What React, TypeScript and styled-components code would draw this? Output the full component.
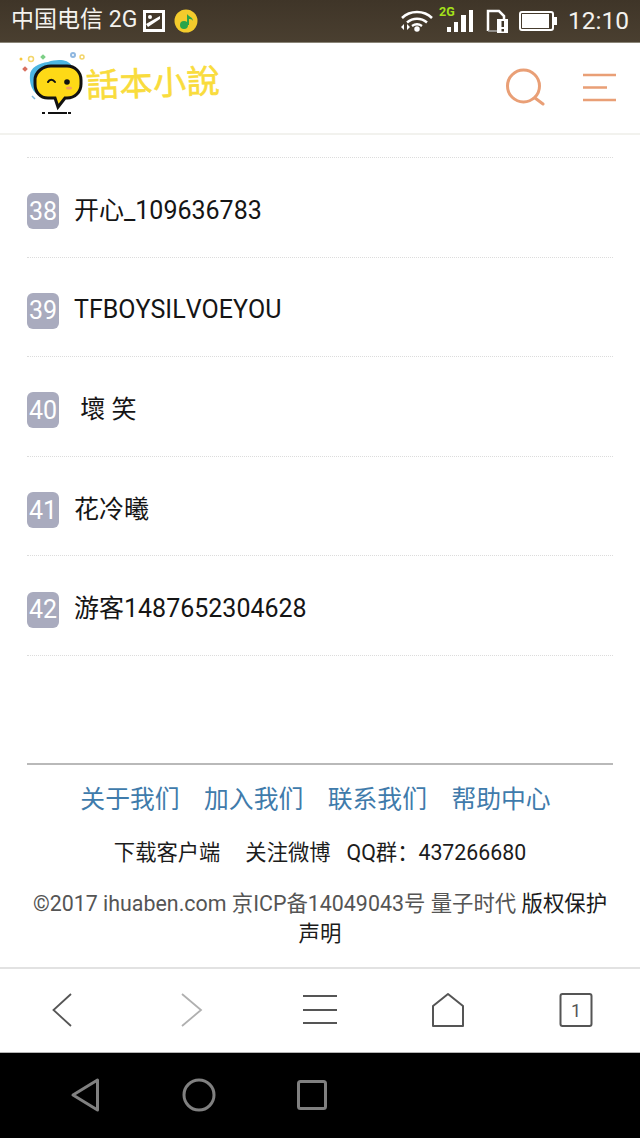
import React from 'react';
import styled, { createGlobalStyle } from 'styled-components';

const GlobalStyle = createGlobalStyle`
  html, body {
    margin: 0;
    padding: 0;
    background: #fff;
  }
  body {
    font-family: Roboto, "Noto Sans CJK SC", sans-serif;
    font-kerning: none;
  }
`;

const Page = styled.div`
  display: flex;
  flex-direction: column;
  height: 1138px;
  overflow: hidden;
  width: 640px;
`;

const StatusBar = styled.div`
  align-items: center;
  background: linear-gradient(#3f3528, #4a3f30);
  border-bottom: 1px solid #8a8578;
  box-sizing: border-box;
  color: #f4f2ee;
  display: flex;
  height: 43px;
  justify-content: space-between;
  padding: 0 11px 0 11px;
`;

const StatusGroup = styled.div<{ $gap: number }>`
  align-items: center;
  display: flex;
  gap: ${(p) => p.$gap}px;
`;

const Carrier = styled.span`
  font-size: 23px;
  line-height: 30px;
  margin-bottom: 3px;
`;

const Clock = styled.span`
  font-size: 24.5px;
  line-height: 30px;
`;

const Header = styled.header`
  align-items: flex-start;
  border-bottom: 2px solid #f2f2ee;
  box-sizing: border-box;
  display: flex;
  height: 92px;
  justify-content: space-between;
  padding: 8px 24px 0 18px;
`;

const Logo = styled.div`
  align-items: flex-start;
  display: flex;
`;

const LogoText = styled.span`
  color: #f9dc3c;
  font-family: "Noto Sans CJK TC", sans-serif;
  font-size: 33px;
  letter-spacing: 0.5px;
  line-height: 40px;
  margin: 10px 0 0 -4px;
  -webkit-text-stroke: 0.6px #f9dc3c;
  transform: rotate(-2deg);
`;

const HeaderActions = styled.div`
  align-items: center;
  display: flex;
  gap: 36px;
  padding-top: 17px;
`;

const List = styled.ul`
  border-top: 1px dotted #dcdcdc;
  flex: none;
  list-style: none;
  margin: 22px 27px 0;
  padding: 0;
`;

const Row = styled.li`
  align-items: center;
  border-bottom: 1px dotted #dcdcdc;
  box-sizing: border-box;
  display: flex;
  gap: 15px;
  height: 99.6px;
  padding-top: 8px;
`;

const Rank = styled.span`
  align-items: center;
  background: #a9abbe;
  border-radius: 6px;
  color: #fff;
  display: flex;
  flex: none;
  font-size: 25px;
  height: 36px;
  justify-content: center;
  width: 32px;
`;

const Name = styled.span`
  color: #151515;
  font-size: 25px;
  line-height: 30px;
  margin-bottom: 1px;
  white-space: pre;
`;

const Footer = styled.footer`
  border-top: 2px solid #b9b9b9;
  box-sizing: border-box;
  height: 204px;
  margin: 107px 27px 0;
  text-align: center;
`;

const FooterLinks = styled.nav`
  display: flex;
  gap: 24.5px;
  justify-content: center;
  margin-top: 18px;
  padding-right: 9px;
`;

const FooterLink = styled.a`
  color: #3f7bab;
  font-size: 24.8px;
  line-height: 34px;
`;

const FooterInfo = styled.div`
  color: #1c1c1c;
  display: flex;
  font-size: 21.3px;
  justify-content: center;
  line-height: 30px;
  margin-top: 21px;
`;

const InfoItem = styled.span<{ $space: number }>`
  margin-right: ${(p) => p.$space}px;
`;

const Copyright = styled.p`
  color: #555;
  font-size: 21.4px;
  line-height: 30px;
  margin: 21px 0 0;
`;

const Strong = styled.span`
  color: #1c1c1c;
`;

const Toolbar = styled.div`
  align-items: center;
  border-top: 2px solid #e2e2e2;
  border-bottom: 1px solid #b5b5b5;
  box-sizing: border-box;
  display: grid;
  grid-template-columns: repeat(5, 1fr);
  height: 86px;
  justify-items: center;
`;

const NavBar = styled.div`
  align-items: center;
  background: #000;
  display: flex;
  flex: 1;
  gap: 81px;
  padding: 0 0 0 69px;
`;

const rows = [
  ['38', '开心_109636783'],
  ['39', 'TFBOYSILVOEYOU'],
  ['40', ' 壞 笑'],
  ['41', '花冷曦'],
  ['42', '游客1487652304628'],
];

const LogoMark = () => (
  <svg width="72" height="66" viewBox="0 0 72 66">
    <circle cx="3" cy="8" r="1.5" fill="#f8c83a" />
    <circle cx="13" cy="8" r="2.500" fill="none" stroke="#f3d56a" strokeWidth="1.5" />
    <rect x="23" y="4" width="4" height="4" fill="#7ccf86" transform="rotate(45 25 6)" />
    <circle cx="55" cy="4" r="2" fill="none" stroke="#8fb7e0" strokeWidth="2" />
    <circle cx="64" cy="6" r="2" fill="none" stroke="#f3d56a" strokeWidth="1.5" />
    <rect x="5" y="16" width="4" height="4" fill="#d9705f" transform="rotate(45 7 18)" />
    <path d="M14 45l3 3" stroke="#7db8dc" strokeWidth="1.5" />
    <path d="M12 24c0-7 9-12 18-13 9-3 20-3 24 4v24L24 44c-8 1-13-10-12-20z" fill="#4cb6e2" />
    <path d="M17 28c1-5 5-9 9-10l14-1-8 12-8 12c-4-3-8-8-7-13z" fill="#6cc98a" />
    <path d="M33 15h16c8 0 14 6 14 14v4c0 8-6 14-14 14h-2l-7 9-3-9h-7c-8 0-13-6-13-14v-4c0-8 8-14 16-14z" fill="#fed916" stroke="#111" strokeWidth="3" />
    <path d="M30 31c1.500-3 5-3 7 0" fill="none" stroke="#111" strokeWidth="2" strokeLinecap="round" />
    <circle cx="49" cy="31" r="2.800" fill="#111" />
    <ellipse cx="51" cy="37" rx="3" ry="1.500" fill="#f4a060" />
    <path d="M24 62h3M30 62h19M50 62h3" stroke="#111" strokeWidth="2" />
  </svg>
);

const SearchIcon = () => (
  <svg width="42" height="38" viewBox="0 0 42 38" fill="none" stroke="#e99f76" strokeWidth="3" strokeLinecap="round">
    <circle cx="19.500" cy="18" r="16" />
    <path d="M31 30l8 6" />
  </svg>
);

const MenuIcon = () => (
  <svg width="34" height="29" viewBox="0 0 34 29" fill="none" stroke="#e99f76" strokeWidth="2.500">
    <path d="M1 2h33M1 14.500h24M1 27h33" />
  </svg>
);

const App = () => (
  <Page>
    <GlobalStyle />
    <StatusBar>
      <StatusGroup $gap={6}>
        <Carrier>中国电信 2G</Carrier>
        <svg width="22" height="22" viewBox="0 0 22 22">
          <rect x="1.500" y="1.500" width="19" height="19" fill="none" stroke="#fff" strokeWidth="3" />
          <path d="M3 14l14-8v3L5 17z" fill="#fff" />
          <circle cx="7" cy="7" r="2" fill="#fff" />
        </svg>
        <svg width="24" height="24" viewBox="0 0 24 24" style={{ marginLeft: 3 }}>
          <circle cx="12" cy="12" r="11.500" fill="#f3cb2c" />
          <circle cx="10" cy="16" r="4" fill="#2aa44a" />
          <path d="M13 16V5c2 3 6 3 6 7-1-2-3-2-4-2v6z" fill="#2aa44a" />
        </svg>
      </StatusGroup>
      <StatusGroup $gap={11}>
        <StatusGroup $gap={6}>
          <svg width="33" height="22" viewBox="0 0 33 22" fill="none" stroke="#fff" strokeWidth="2.500">
            <path d="M2 8c8-8 22-8 30 0M7 12.500c6-5 14-5 20 0M12 16c3-2 7-2 10 0" />
            <circle cx="17" cy="19" r="1.500" fill="#fff" />
            <path d="M4 14v6L1 17zM7 14v6l3-3z" fill="#fff" stroke="none" />
          </svg>
          <svg width="34" height="30" viewBox="0 0 34 30">
            <text x="0" y="10" fontSize="12.500" fontWeight="700" fill="#a4e01a" fontFamily="Roboto, sans-serif">2G</text>
            <path d="M8 21h4v5H8zM15 16h4v10h-4zM22 9h5v17h-5zM30 4h4v22h-4z" fill="#fff" />
          </svg>
        </StatusGroup>
        <svg width="22" height="24" viewBox="0 0 22 24" style={{ marginLeft: 2 }}>
          <path d="M2 22V2h11l5 5v3" fill="none" stroke="#fff" strokeWidth="2.500" />
          <path d="M2 22h9" stroke="#aaa" strokeWidth="1.500" />
          <rect x="11" y="10" width="11" height="14" fill="#fff" />
          <rect x="15.500" y="12" width="2.500" height="6" fill="#3f3528" />
          <rect x="15.500" y="20" width="2.500" height="2.500" fill="#3f3528" />
        </svg>
        <svg width="38" height="20" viewBox="0 0 38 20">
          <rect x="1" y="1" width="33" height="18" rx="2" fill="none" stroke="#fff" strokeWidth="2" />
          <rect x="3" y="3" width="27" height="14" fill="#fff" />
          <rect x="35" y="6" width="3" height="8" fill="#fff" />
        </svg>
        <Clock>12:10</Clock>
      </StatusGroup>
    </StatusBar>
    <Header>
      <Logo>
        <LogoMark />
        <LogoText>話本小說</LogoText>
      </Logo>
      <HeaderActions>
        <SearchIcon />
        <MenuIcon />
      </HeaderActions>
    </Header>
    <List>
      {rows.map(([rank, name]) => (
        <Row key={rank}>
          <Rank>{rank}</Rank>
          <Name>{name}</Name>
        </Row>
      ))}
    </List>
    <Footer>
      <FooterLinks>
        <FooterLink>关于我们</FooterLink>
        <FooterLink>加入我们</FooterLink>
        <FooterLink>联系我们</FooterLink>
        <FooterLink>帮助中心</FooterLink>
      </FooterLinks>
      <FooterInfo>
        <InfoItem $space={25}>下载客户端</InfoItem>
        <InfoItem $space={16}>关注微博</InfoItem>
        <span>QQ群：437266680</span>
      </FooterInfo>
      <Copyright>
        ©2017 ihuaben.com 京ICP备14049043号 量子时代 <Strong>版权保护声明</Strong>
      </Copyright>
    </Footer>
    <Toolbar>
      <svg width="28" height="36" viewBox="0 0 28 36" fill="none" stroke="#555" strokeWidth="1.800">
        <path d="M21 2L3.500 18 21 34" />
      </svg>
      <svg width="24" height="36" viewBox="0 0 24 36" fill="none" stroke="#b0b0b0" strokeWidth="1.800">
        <path d="M2 2l19 16L2 34" />
      </svg>
      <svg width="36" height="34" viewBox="0 0 36 34" fill="none" stroke="#555" strokeWidth="2">
        <path d="M1 3h34M1 17h34M1 30h34" />
      </svg>
      <svg width="34" height="36" viewBox="0 0 34 36" fill="none" stroke="#555" strokeWidth="2" strokeLinejoin="round">
        <path d="M17 2L2 14v20h30V14z" />
      </svg>
      <svg width="34" height="36" viewBox="0 0 34 36">
        <rect x="1.500" y="2" width="31" height="32" rx="2" fill="none" stroke="#555" strokeWidth="2" />
        <text x="17" y="25" fontSize="18" textAnchor="middle" fill="#555" fontFamily="Roboto, sans-serif">1</text>
      </svg>
    </Toolbar>
    <NavBar>
      <svg width="32" height="36" viewBox="0 0 32 36" fill="none" stroke="#808080" strokeWidth="3" strokeLinejoin="round">
        <path d="M28.500 3v30L4 18z" />
      </svg>
      <svg width="34" height="34" viewBox="0 0 34 34" fill="none" stroke="#808080" strokeWidth="3">
        <circle cx="17" cy="17" r="15" />
      </svg>
      <svg width="30" height="30" viewBox="0 0 30 30" fill="none" stroke="#808080" strokeWidth="3" strokeLinejoin="round">
        <rect x="1.500" y="1.500" width="27" height="27" rx="2" />
      </svg>
    </NavBar>
  </Page>
);

export default App;
